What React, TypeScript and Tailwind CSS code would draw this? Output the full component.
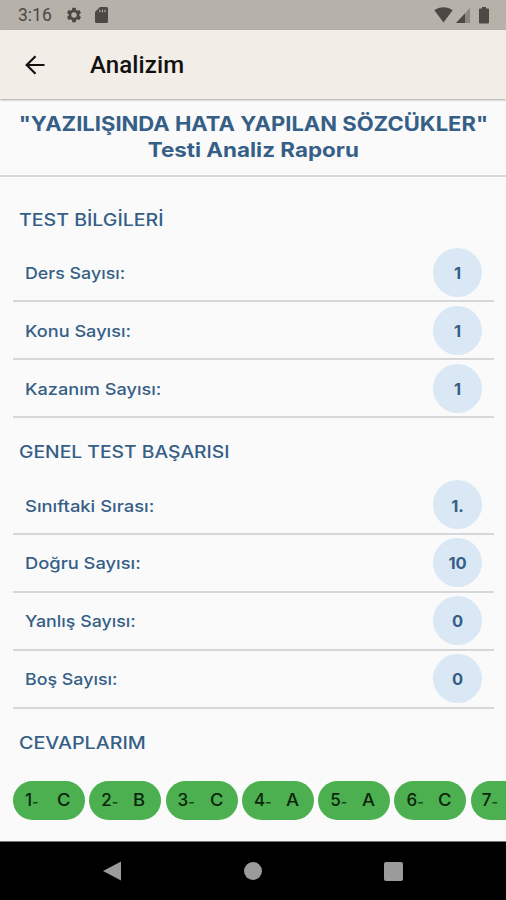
import type { ReactNode } from 'react';

interface Stat {
  label: string;
  value: string;
  stretch: string;
}

const testInfo: Stat[] = [
  { label: 'Ders Sayısı:', value: '1', stretch: 'scale-x-[1.08]' },
  { label: 'Konu Sayısı:', value: '1', stretch: 'scale-x-[1.1]' },
  { label: 'Kazanım Sayısı:', value: '1', stretch: 'scale-x-[1.1]' },
];

const testResult: Stat[] = [
  { label: 'Sınıftaki Sırası:', value: '1.', stretch: 'scale-x-[1.115]' },
  { label: 'Doğru Sayısı:', value: '10', stretch: 'scale-x-[1.11]' },
  { label: 'Yanlış Sayısı:', value: '0', stretch: 'scale-x-[1.08]' },
  { label: 'Boş Sayısı:', value: '0', stretch: 'scale-x-[1.08]' },
];

const answers = ['C', 'B', 'C', 'A', 'A', 'C'];

function StatusBar() {
  return (
    <div className="flex h-[30px] shrink-0 items-center bg-[#b6b2aa] pr-[17px] pl-[18px] text-[#4c4945]">
      <span className="w-[47px] pt-[2px] font-['Roboto',sans-serif] text-[17.500px] leading-none">3:16</span>
      <svg className="size-[18px]" viewBox="0 0 24 24" fill="currentColor">
        <path d="M19.14 12.94c.04-.3.06-.61.06-.94s-.02-.64-.07-.94l2.03-1.58a.49.49 0 0 0 .12-.61l-1.92-3.32a.49.49 0 0 0-.59-.22l-2.39.96a7 7 0 0 0-1.62-.94l-.36-2.54a.48.48 0 0 0-.48-.41h-3.84a.47.47 0 0 0-.47.41l-.36 2.54c-.59.24-1.13.57-1.62.94l-2.39-.96a.48.48 0 0 0-.59.22L2.74 8.87a.47.47 0 0 0 .12.61l2.03 1.58c-.05.3-.09.63-.09.94s.02.64.07.94l-2.03 1.58a.49.49 0 0 0-.12.61l1.92 3.32c.12.22.37.29.59.22l2.39-.96c.5.38 1.03.7 1.62.94l.36 2.54c.05.24.24.41.48.41h3.84c.24 0 .44-.17.47-.41l.36-2.54a7 7 0 0 0 1.62-.94l2.39.96c.22.08.47 0 .59-.22l1.92-3.32a.47.47 0 0 0-.12-.61zM12 15.6a3.6 3.6 0 1 1 0-7.2 3.6 3.6 0 0 1 0 7.2" />
      </svg>
      <svg className="ml-[12px] h-[16px] w-[13px]" viewBox="0 0 13 16" fill="currentColor">
        <path
          fillRule="evenodd"
          d="M5 0h6.500a1.500 1.500 0 0 1 1.500 1.500v13a1.500 1.500 0 0 1-1.500 1.500h-10A1.500 1.500 0 0 1 0 14.500V5zM4.300 2.700v2.600h1.100V2.700zM6.900 2.700v2.600H8V2.700zM9.500 2.700v2.600h1.100V2.700z"
        />
      </svg>
      <svg className="ml-auto h-[16px] w-[19px]" viewBox="0 0 19 16" fill="currentColor">
        <path d="M9.500 15.500 0.300 3.300C3 1.300 6 .3 9.500 .3s6.500 1 9.200 3z" />
      </svg>
      <svg className="ml-[3px] h-[15px] w-[14px]" viewBox="0 0 14 15" fill="currentColor">
        <path d="M14 0v15H0z" opacity="0.4" />
        <path d="M9 5.400V15H0z" />
      </svg>
      <svg className="ml-[9px] h-[17px] w-[10px]" viewBox="0 0 10 17" fill="currentColor">
        <path d="M3 0h4v1.500h2a1 1 0 0 1 1 1v13a1 1 0 0 1-1 1H1a1 1 0 0 1-1-1v-13a1 1 0 0 1 1-1h2z" />
      </svg>
    </div>
  );
}

function AppBar() {
  return (
    <header className="z-10 flex h-[69px] shrink-0 items-center bg-[#f2ede6] pl-[25px] text-[#111] shadow-[0_1px_2px_rgba(0,0,0,0.35)]">
      <svg className="size-[20px]" viewBox="0 0 20 20" fill="none" stroke="currentColor" strokeWidth="2.200">
        <path d="M19.500 10H2M10.500 1.200 1.700 10l8.800 8.800" />
      </svg>
      <h1 className="ml-[45px] font-['Roboto',sans-serif] text-[24px] leading-none font-medium tracking-[0.1px]">
        Analizim
      </h1>
    </header>
  );
}

function SectionTitle({ className, stretch, children }: { className: string; stretch: string; children: ReactNode }) {
  return (
    <h3 className={`flex items-center pl-[19px] text-[17px] font-medium ${className}`}>
      <span className={`origin-left ${stretch}`}>{children}</span>
    </h3>
  );
}

function StatList({ stats }: { stats: Stat[] }) {
  return (
    <ul className="mr-[12px] ml-[13px]">
      {stats.map((stat) => (
        <li
          key={stat.label}
          className="flex h-[57.900px] items-center justify-between border-b-2 border-[#d5d7d8] pr-[12px] pl-[12px]"
        >
          <span className={`origin-left pt-[2px] text-[16.500px] font-medium ${stat.stretch}`}>{stat.label}</span>
          <span className="flex size-[49px] items-center justify-center rounded-full bg-[#dae8f5] pt-[2px] text-[16.500px] font-bold">
            {stat.value}
          </span>
        </li>
      ))}
    </ul>
  );
}

function AnswerNumber({ value }: { value: number }) {
  return (
    <span className="flex w-[32px] items-center">
      {value}
      <span className="text-[14px] font-semibold text-[#17481a]">-</span>
    </span>
  );
}

function NavBar() {
  return (
    <nav className="flex h-[59px] shrink-0 items-center border-t border-[#777] bg-black pl-[103px] text-[#9b9b9b]">
      <svg className="h-[20px] w-[18px]" viewBox="0 0 18 20" fill="currentColor">
        <path d="M18 .5v19L0 10z" />
      </svg>
      <span className="ml-[123px] size-[18px] rounded-full bg-[#9b9b9b]" />
      <span className="ml-[121.500px] size-[19px] rounded-[2px] bg-[#9b9b9b]" />
    </nav>
  );
}

export default function App() {
  return (
    <div className="flex h-[900px] w-[506px] flex-col overflow-hidden bg-[#fafafa] font-['Inter',sans-serif] text-[#365f87]">
      <StatusBar />
      <AppBar />
      <main className="min-h-0 flex-1 overflow-hidden">
        <h2 className="flex h-[77.500px] flex-col items-center border-b-2 border-[#d8d8d8] pt-[12px] text-[20px] leading-[26px] font-bold whitespace-nowrap">
          <span className="scale-x-[1.1]">"YAZILIŞINDA HATA YAPILAN SÖZCÜKLER"</span>
          <span className="scale-x-[1.12]">Testi Analiz Raporu</span>
        </h2>
        <SectionTitle className="h-[67.800px] pt-[20px]" stretch="scale-x-[1.15]">
          TEST BİLGİLERİ
        </SectionTitle>
        <StatList stats={testInfo} />
        <SectionTitle className="h-[59px] pt-[11px]" stretch="scale-x-[1.135]">
          GENEL TEST BAŞARISI
        </SectionTitle>
        <StatList stats={testResult} />
        <SectionTitle className="h-[72px] pb-[2px]" stretch="scale-x-[1.16]">
          CEVAPLARIM
        </SectionTitle>
        <div className="flex gap-[4.300px] pl-[13px] text-[17px] font-medium text-[#0b240c]">
          {answers.map((answer, i) => (
            <div
              key={i}
              className="flex h-[39px] w-[72px] shrink-0 items-center rounded-full bg-[#4caf50] pt-[2px] pl-[12px]"
            >
              <AnswerNumber value={i + 1} />
              <span className="origin-left scale-x-[1.08]">{answer}</span>
            </div>
          ))}
          <div className="flex h-[39px] flex-1 items-center rounded-l-full bg-[#4caf50] pt-[2px] pl-[11px]">
            <AnswerNumber value={7} />
          </div>
        </div>
      </main>
      <NavBar />
    </div>
  );
}
